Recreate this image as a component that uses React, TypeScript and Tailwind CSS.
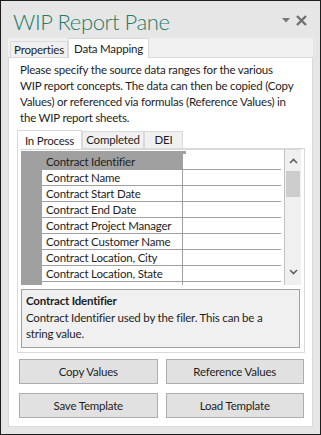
import { useState } from 'react'

const fields = [
  'Contract Identifier',
  'Contract Name',
  'Contract Start Date',
  'Contract End Date',
  'Contract Project Manager',
  'Contract Customer Name',
  'Contract Location, City',
  'Contract Location, State',
]

function Chevron({ up }: { up?: boolean }) {
  return (
    <svg width="9" height="6" viewBox="0 0 9 6" className="block">
      <path d={up ? 'M1 5 L4.5 1.5 L8 5' : 'M1 1 L4.5 4.5 L8 1'} fill="none" stroke="#606060" strokeWidth="1.6" />
    </svg>
  )
}

export default function App() {
  const [tab, setTab] = useState('map')
  const [sub, setSub] = useState('proc')
  const [sel, setSel] = useState(0)

  return (
    <div className="w-[321px] h-[435px] border border-[#1e1e1e] bg-[#e6e6e6] flex flex-col text-[11.5px] tracking-[-0.2px] text-[#1e1e1e]" style={{ fontFamily: 'Lato, "Liberation Sans", sans-serif' }}>
      {/* header */}
      <div className="h-[37px] flex items-start justify-between pl-[12px] pr-[13px]">
        <div className="text-[22px] leading-none font-light tracking-[-0.4px] text-[#267a68] mt-[10px]">WIP Report Pane</div>
        <div className="flex items-center gap-[6px] mt-[14px]">
          <svg width="8" height="5" viewBox="0 0 8 5"><path d="M0 0 H8 L4 4.5 Z" fill="#777" /></svg>
          <svg width="11" height="11" viewBox="0 0 11 11"><path d="M1 1 L10 10 M10 1 L1 10" stroke="#707070" strokeWidth="2.4" /></svg>
        </div>
      </div>

      {/* tabs */}
      <div className="mx-[7px] flex flex-col flex-1 mb-[7px]">
        <div className="flex items-end h-[19px] bg-[#f0f0f0] pl-[2px]">
          <button onClick={() => setTab('props')} className={`w-[58px] h-[16px] border border-b-0 border-[#d9d9d9] leading-[15px] ${tab === 'props' ? 'bg-white' : 'bg-[#f0f0f0]'}`}>Properties</button>
          <button onClick={() => setTab('map')} className={`w-[81px] h-[20px] -mb-px border border-b-0 border-[#d9d9d9] leading-[17px] relative z-10 ${tab === 'map' ? 'bg-white' : 'bg-[#f0f0f0]'}`}>Data Mapping</button>
        </div>
        <div className="flex-1 bg-white border border-[#d9d9d9] pt-[4px] pl-[8px] pr-[7px] flex flex-col">
          <p className="leading-[16px] pl-[3px] whitespace-nowrap">
            <span className="block">Please specify the source data ranges for the various</span>
            <span className="block">WIP report concepts. The data can then be copied (Copy</span>
            <span className="block">Values) or referenced via formulas (Reference Values) in</span>
            <span className="block">the WIP report sheets.</span>
          </p>

          {/* inner tabs */}
          <div className="mt-[4px] flex flex-col">
            <div className="flex items-end h-[18px]">
              {[['proc', 'In Process', 'w-[65px]'], ['comp', 'Completed', 'w-[62px]'], ['dei', 'DEI', 'w-[39px]']].map(([k, l, w]) => (
                <button key={k} onClick={() => setSub(k)}
                  className={`${w} text-center border border-b-0 border-[#d9d9d9] whitespace-nowrap ${sub === k ? 'h-[19px] bg-white -mb-px relative z-10 leading-[17px]' : 'h-[17px] bg-[#f0f0f0] leading-[16px]'}`}>{l}</button>
              ))}
            </div>
            <div className="border border-[#d9d9d9] pl-[3px] pr-[3px] pb-[4px]">
              {/* grid */}
              <div className="h-[136px] border-t border-[#d9d9d9] flex overflow-hidden">
                <div className="flex-1 flex flex-col pt-[1px] border-r border-[#c0c0c0] overflow-hidden">
                  <div className="h-[3px] bg-[#a0a0a0] mr-[98px] shrink-0" />
                  {fields.map((f, i) => (
                    <div key={f} onClick={() => setSel(i)} className="flex h-[16px] shrink-0">
                      <div className="w-[21px] bg-[#a0a0a0]" />
                      <div className={`w-[141px] border-b border-r border-[#a0a0a0] pl-[4px] leading-[15px] whitespace-nowrap ${sel === i ? 'bg-[#a0a0a0]' : ''}`}>{f}</div>
                      <div className="w-[98px] border-b border-[#a0a0a0]" />
                    </div>
                  ))}
                  <div className="flex h-[16px] shrink-0">
                    <div className="w-[21px] bg-[#a0a0a0]" />
                    <div className="w-[141px] border-r border-[#a0a0a0]" />
                  </div>
                </div>
                <div className="w-[16px] bg-[#f0f0f0] flex flex-col items-center shrink-0">
                  <div className="h-[21px] flex items-center"><Chevron up /></div>
                  <div className="w-[14px] h-[26px] bg-[#cdcdcd]" />
                  <div className="flex-1" />
                  <div className="h-[16px] flex items-start"><Chevron /></div>
                </div>
              </div>

              {/* description */}
              <div className="mt-[4px] mr-[1px] h-[59px] border border-[#a0a0a0] bg-[#f0f0f0] pl-[4px] pr-[20px] pt-[3px]">
                <div className="font-bold leading-[16px]">{fields[sel]}</div>
                <div className="leading-[16px] mt-[1px]">{fields[sel]} used by the filer. This can be a string value.</div>
              </div>
            </div>
          </div>

          {/* buttons */}
          <div className="grid grid-cols-2 gap-x-[8px] gap-y-[9px] mt-[6px] pl-[2px] pr-[1px]">
            {['Copy Values', 'Reference Values', 'Save Template', 'Load Template'].map(b => (
              <button key={b} className="h-[25px] bg-[#e1e1e1] border border-[#adadad] text-center">{b}</button>
            ))}
          </div>
        </div>
      </div>
    </div>
  )
}
